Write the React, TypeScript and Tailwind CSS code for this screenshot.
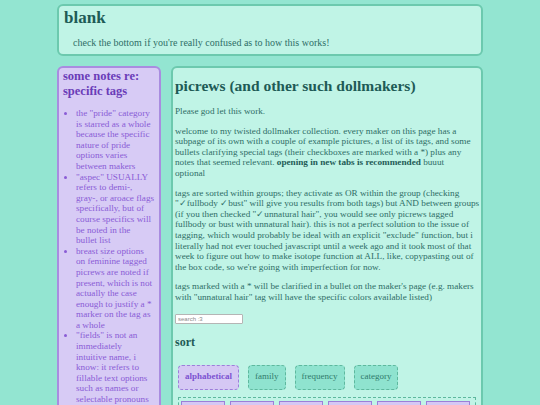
import { Fragment, type ReactNode } from 'react'

const notes: string[][] = [
  ['the "pride" category', 'is starred as a whole', 'because the specific', 'nature of pride', 'options varies', 'between makers'],
  ['"aspec" USUALLY', 'refers to demi-,', 'gray-, or aroace flags', 'specifically, but of', 'course specifics will', 'be noted in the', 'bullet list'],
  ['breast size options', 'on feminine tagged', 'picrews are noted if', 'present, which is not', 'actually the case', 'enough to justify a *', 'marker on the tag as', 'a whole'],
  ['"fields" is not an', 'immediately', 'intuitive name, i', 'know: it refers to', 'fillable text options', 'such as names or', 'selectable pronouns'],
]

const sorts = [
  { label: 'alphabetical', active: true },
  { label: 'family', active: false },
  { label: 'frequency', active: false },
  { label: 'category', active: false },
]

function Lines({ lines }: { lines: ReactNode[] }) {
  return (
    <>
      {lines.map((l, i) => (
        <Fragment key={i}>
          {l}
          {i < lines.length - 1 && <br />}
        </Fragment>
      ))}
    </>
  )
}

export default function App() {
  return (
    <div className="min-h-screen bg-[#93e5d1] pt-[4px] font-['Liberation_Serif',serif]">
      <div className="mx-auto w-[426px]">
        {/* header */}
        <div className="h-[52px] rounded-md border-2 border-[#6cc9ae] bg-[#c0f4e6] px-[5px] pt-[2px]">
          <h1 className="text-[17px] font-bold leading-[20px] text-[#1e5b56]">blank</h1>
          <p className="ml-[9px] mt-[9px] text-[10px] leading-[12px] text-[#2f6e66]">
            check the bottom if you're really confused as to how this works!
          </p>
        </div>

        <div className="mt-[10px] flex items-start gap-[10px]">
          {/* sidebar */}
          <div className="h-[360px] w-[104px] shrink-0 rounded-md border-2 border-[#a98ce0] bg-[#d7cbf5] px-[4px] pt-[1px]">
            <h2 className="text-[12.5px] font-bold leading-[15px] text-[#6a3cb8]">
              some notes re: specific tags
            </h2>
            <ul className="mt-[9px] list-disc whitespace-nowrap pl-[13px] text-[9.2px] leading-[10.6px] text-[#8a5cd6]">
              {notes.map((n, i) => (
                <li key={i}>
                  <Lines lines={n} />
                </li>
              ))}
            </ul>
          </div>

          {/* main */}
          <div className="h-[360px] flex-1 overflow-hidden rounded-md border-2 border-[#6cc9ae] bg-[#c0f4e6] px-[2px]">
            <h2 className="mt-[9px] text-[15.5px] font-bold leading-[18px] text-[#1e5b56]">
              picrews (and other such dollmakers)
            </h2>
            <div className="flex flex-col gap-[9px] whitespace-nowrap text-[9.2px] leading-[10.6px] text-[#2f6e66]">
              <p className="mt-[11px]">Please god let this work.</p>
              <p>
                <Lines
                  lines={[
                    'welcome to my twisted dollmaker collection. every maker on this page has a',
                    'subpage of its own with a couple of example pictures, a list of its tags, and some',
                    'bullets clarifying special tags (their checkboxes are marked with a *) plus any',
                    <>
                      notes that seemed relevant. <b className="text-[#1e5b56]">opening in new tabs is recommended</b> buuut
                    </>,
                    'optional',
                  ]}
                />
              </p>
              <p>
                <Lines
                  lines={[
                    'tags are sorted within groups; they activate as OR within the group (checking',
                    '"✓fullbody ✓bust" will give you results from both tags) but AND between groups',
                    '(if you then checked "✓unnatural hair", you would see only picrews tagged',
                    'fullbody or bust with unnatural hair). this is not a perfect solution to the issue of',
                    'tagging, which would probably be ideal with an explicit "exclude" function, but i',
                    'literally had not ever touched javascript until a week ago and it took most of that',
                    'week to figure out how to make isotope function at ALL, like, copypasting out of',
                    "the box code, so we're going with imperfection for now.",
                  ]}
                />
              </p>
              <p>
                <Lines
                  lines={[
                    "tags marked with a * will be clarified in a bullet on the maker's page (e.g. makers",
                    'with "unnatural hair" tag will have the specific colors available listed)',
                  ]}
                />
              </p>
            </div>

            <input
              type="text"
              placeholder="search :3"
              className="mt-[11px] block h-[10px] w-[68px] rounded-[1px] border border-[#b5b5b5] bg-white px-[2px] font-['Liberation_Sans',sans-serif] text-[6px] placeholder:text-[#8a8a8a]"
            />

            <h3 className="mt-[11px] text-[12px] font-bold leading-[14px] text-[#1e5b56]">sort</h3>

            <div className="ml-[3px] mt-[16px] flex gap-[9px]">
              {sorts.map((s) =>
                s.active ? (
                  <button
                    key={s.label}
                    className="h-[25px] rounded-[4px] border border-dashed border-[#9c7fd9] bg-[#d5c8f4] px-[6px] text-[9px] font-bold text-[#7c52d1]"
                  >
                    {s.label}
                  </button>
                ) : (
                  <button
                    key={s.label}
                    className="h-[25px] rounded-[4px] border border-dashed border-[#5eb89e] bg-[#8fe3cf] px-[6px] text-[9px] text-[#2f7b6c]"
                  >
                    {s.label}
                  </button>
                ),
              )}
            </div>

            <div className="mx-[3px] mt-[7px] flex gap-[5px] border border-dashed border-[#5eb89e] px-[2px] pt-[3px]">
              {[0, 1, 2, 3, 4, 5].map((i) => (
                <div key={i} className="h-[30px] w-[44px] border border-[#9c7fd9] bg-[#d5c8f4]" />
              ))}
            </div>
          </div>
        </div>
      </div>
    </div>
  )
}
